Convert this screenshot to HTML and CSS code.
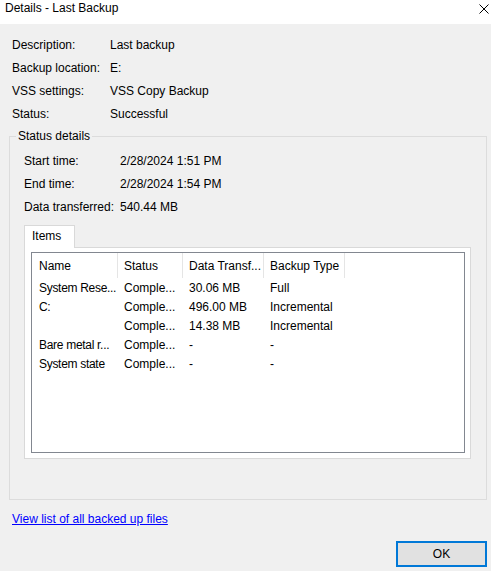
FILE: index.html
```html
<!DOCTYPE html>
<html>
<head>
<meta charset="utf-8">
<title>Details - Last Backup</title>
<link rel="stylesheet" href="styles.css">
</head>
<body>
<div class="window">
  <div class="titlebar">
    <span class="title">Details - Last Backup</span>
    <svg class="close" width="10" height="10" viewBox="0 0 10 10"><path d="M0.5 0.5L9.5 9.5M9.5 0.5L0.5 9.5" stroke="#000" stroke-width="1" fill="none"/></svg>
  </div>
  <div class="info">
    <span>Description:</span><span>Last backup</span>
    <span>Backup location:</span><span>E:</span>
    <span>VSS settings:</span><span>VSS Copy Backup</span>
    <span>Status:</span><span>Successful</span>
  </div>
  <fieldset class="group">
    <legend>Status details</legend>
    <div class="group-body">
      <div class="details">
        <span>Start time:</span><span>2/28/2024 1:51 PM</span>
        <span>End time:</span><span>2/28/2024 1:54 PM</span>
        <span>Data transferred:</span><span>540.44 MB</span>
      </div>
      <div class="tabs">
        <div class="tab">Items</div>
      </div>
      <div class="panel">
        <div class="listview">
          <div class="lv-head">
            <div class="hcell c1">Name</div>
            <div class="hcell">Status</div>
            <div class="hcell">Data Transf...</div>
            <div class="hcell">Backup Type</div>
          </div>
          <div class="lv-row"><span class="c1">System Rese...</span><span>Comple...</span><span>30.06 MB</span><span>Full</span></div>
          <div class="lv-row"><span class="c1">C:</span><span>Comple...</span><span>496.00 MB</span><span>Incremental</span></div>
          <div class="lv-row"><span class="c1"></span><span>Comple...</span><span>14.38 MB</span><span>Incremental</span></div>
          <div class="lv-row"><span class="c1">Bare metal r...</span><span>Comple...</span><span>-</span><span>-</span></div>
          <div class="lv-row"><span class="c1">System state</span><span>Comple...</span><span>-</span><span>-</span></div>
        </div>
      </div>
    </div>
  </fieldset>
  <div class="linkrow"><a href="#" class="link">View list of all backed up files</a></div>
  <div class="buttons"><button class="ok">OK</button></div>
</div>
</body>
</html>
```

FILE: styles.css
```css
* { box-sizing: border-box; }
html, body {
  margin: 0;
  padding: 0;
}
body {
  width: 491px;
  height: 571px;
  overflow: hidden;
  background: #f0f0f0;
  font-family: "Liberation Sans", Arial, sans-serif;
  font-size: 12px;
  color: #000;
}
.window {
  width: 491px;
  height: 571px;
  background: #f0f0f0;
}
.titlebar {
  height: 24px;
  background: #fff;
  display: flex;
  justify-content: space-between;
  align-items: flex-start;
  padding: 0 2px 0 5px;
}
.title {
  line-height: 17px;
}
.close {
  margin-top: 4px;
}
.info {
  display: grid;
  grid-template-columns: 98px 1fr;
  padding: 10px 0 0 12px;
  line-height: 23px;
}
.group {
  margin: 2px 4px 0 9px;
  padding: 0 0 0 6px;
  border: 1px solid #dcdcdc;
  min-width: 0;
}
.group legend {
  padding: 0 2px;
  line-height: 16px;
}
.group-body {
  padding: 6px 0 40px 8px;
}
.details {
  display: grid;
  grid-template-columns: 96px 1fr;
  line-height: 23px;
}
.tabs {
  display: flex;
  margin-top: 6px;
}
.tab {
  position: relative;
  z-index: 1;
  width: 51px;
  height: 23px;
  margin-bottom: -1px;
  padding: 0 0 2px 7px;
  line-height: 21px;
  background: #fff;
  border: 1px solid #d9d9d9;
  border-bottom: none;
}
.panel {
  width: 447px;
  height: 212px;
  background: #fff;
  border: 1px solid #d9d9d9;
  padding: 4px 5px 5px 6px;
}
.listview {
  width: 434px;
  height: 201px;
  border: 1px solid #828790;
  background: #fff;
}
.lv-head, .lv-row {
  display: grid;
  grid-template-columns: 86px 65px 81px 81px;
}
.lv-head {
  height: 25px;
  margin-bottom: 1px;
}
.hcell {
  height: 25px;
  line-height: 27px;
  border-right: 1px solid #e5e5e5;
  padding-left: 6px;
  white-space: nowrap;
  overflow: hidden;
}
.lv-row {
  line-height: 19px;
}
.lv-row span {
  padding-left: 6px;
  white-space: nowrap;
  overflow: hidden;
}
.lv-head .c1, .lv-row .c1 {
  padding-left: 7px;
}
.lv-row .c1 {
  letter-spacing: -0.3px;
}
.linkrow {
  margin-top: 11px;
  padding-left: 12px;
  line-height: 16px;
}
.link {
  color: #0000ff;
  text-decoration: underline;
}
.buttons {
  display: flex;
  justify-content: flex-end;
  margin-top: 14px;
  padding-right: 4px;
}
.ok {
  width: 91px;
  height: 26px;
  margin: 0;
  padding: 0;
  background: #e1e1e1;
  border: 2px solid #0078d7;
  font-family: "Liberation Sans", Arial, sans-serif;
  font-size: 12px;
  color: #000;
}
```
